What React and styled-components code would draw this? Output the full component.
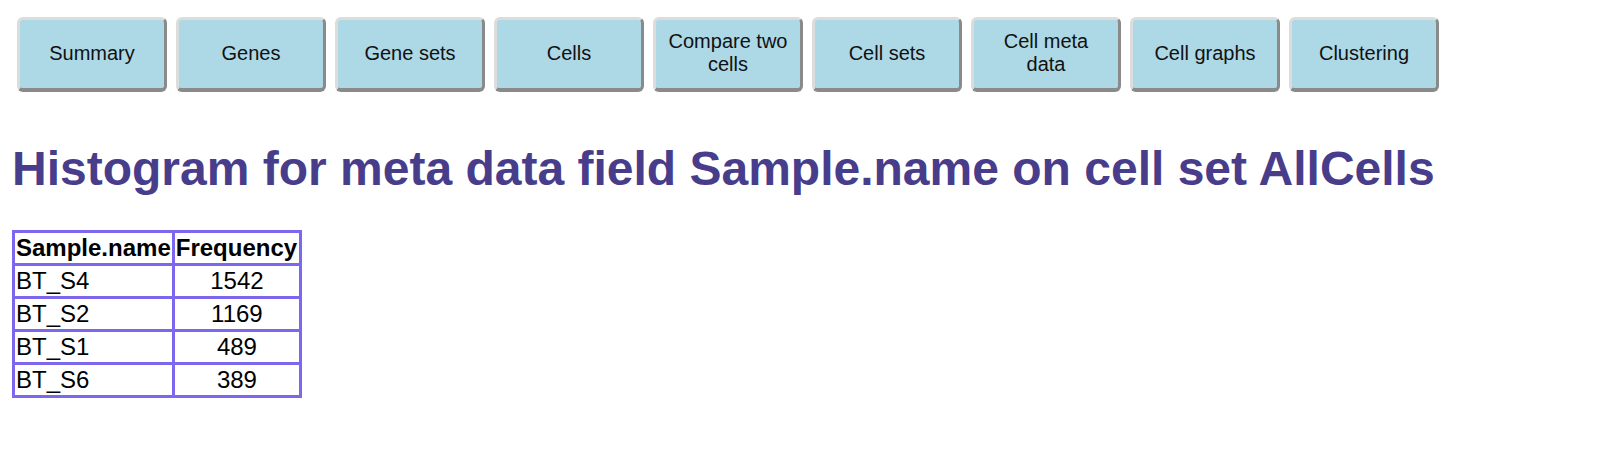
import React from "react";
import styled, { createGlobalStyle } from "styled-components";

const GlobalStyle = createGlobalStyle`
    body {
        margin: 8px;
        background: #ffffff;
        font-family: "Liberation Sans", Arial, sans-serif;
        color: #000000;
    }
`;

const NavBar = styled.nav`
    display: flex;
    gap: 9px;
    padding: 9px 0 0 9px;
`;

const NavButton = styled.button`
    box-sizing: border-box;
    width: 150px;
    height: 75px;
    padding: 0 8px 2px;
    background: #add8e6;
    border-style: solid;
    border-width: 3px 3px 4px 3px;
    border-color: #dcdcdc #8a8a8a #8a8a8a #dcdcdc;
    border-radius: 6px;
    font-family: "Liberation Sans", Arial, sans-serif;
    font-size: 20px;
    color: #111;
    cursor: pointer;
`;

const Title = styled.h1`
    margin: 49px 0 34px 4px;
    font-size: 48px;
    font-weight: bold;
    color: #483d8b;
    white-space: nowrap;
`;

const Table = styled.table`
    margin-left: 4px;
    border-collapse: collapse;
    border: 3px solid #7b68ee;
    font-size: 24px;
`;

const Cell = styled.td`
    border: 3px solid #7b68ee;
    padding: 1px ${(p) => (p.$wide ? "2px" : "1px")} 1px 1px;
    text-align: ${(p) => (p.$center ? "center" : "left")};
    font-weight: ${(p) => (p.$head ? "bold" : "normal")};
`;

const tabs = [
    "Summary",
    "Genes",
    "Gene sets",
    "Cells",
    "Compare two cells",
    "Cell sets",
    "Cell meta data",
    "Cell graphs",
    "Clustering",
];

const rows = [
    ["BT_S4", 1542],
    ["BT_S2", 1169],
    ["BT_S1", 489],
    ["BT_S6", 389],
];

export default function App() {
    return (
        <>
            <GlobalStyle />
            <NavBar>
                {tabs.map((t) => (
                    <NavButton key={t}>{t}</NavButton>
                ))}
            </NavBar>
            <Title>Histogram for meta data field Sample.name on cell set AllCells</Title>
            <Table>
                <tbody>
                    <tr>
                        <Cell $head>Sample.name</Cell>
                        <Cell $head $wide>Frequency</Cell>
                    </tr>
                    {rows.map(([name, n]) => (
                        <tr key={name}>
                            <Cell>{name}</Cell>
                            <Cell $center>{n}</Cell>
                        </tr>
                    ))}
                </tbody>
            </Table>
        </>
    );
}
